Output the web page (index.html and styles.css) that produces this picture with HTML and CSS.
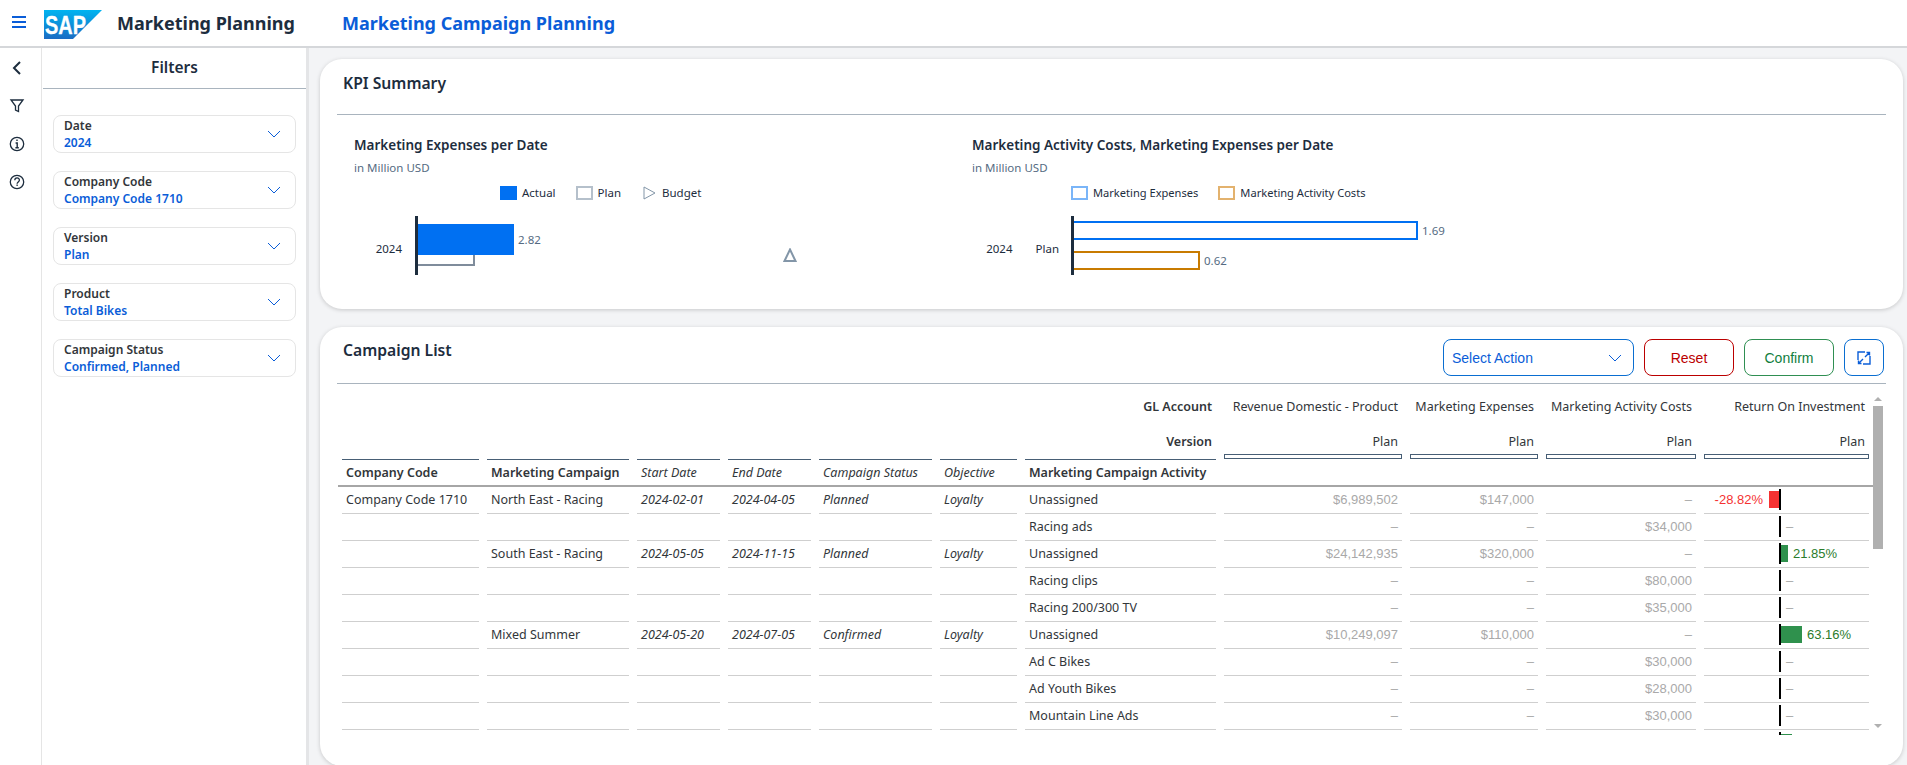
FILE: index.html
```html
<!DOCTYPE html>
<html lang="en">
<head>
    <meta charset="UTF-8">
    <meta name="viewport" content="width=device-width, initial-scale=1.0">
    <title>Marketing Planning</title>
    <link rel="stylesheet" href="styles.css">
</head>
<body>
    <header class="shell-bar">
        <svg class="menu-icon" width="14" height="12" viewBox="0 0 14 12"><path d="M0 1h14M0 6h14M0 11h14" stroke="#0a5dd8" stroke-width="2"/></svg>
        <svg class="sap-logo" width="58" height="29" viewBox="0 0 58 29">
            <defs><linearGradient id="sapBlue" x1="0" y1="0" x2="0" y2="1"><stop offset="0" stop-color="#00b4f0"/><stop offset="1" stop-color="#1a6cc4"/></linearGradient></defs>
            <polygon points="0,0 58,0 29,29 0,29" fill="url(#sapBlue)"/>
            <text x="1" y="24" fill="#fff" stroke="#fff" stroke-width="0.300" font-family="Liberation Sans" font-weight="700" font-size="25" textLength="41" lengthAdjust="spacingAndGlyphs">SAP</text>
        </svg>
        <span class="app-title">Marketing Planning</span>
        <span class="page-title">Marketing Campaign Planning</span>
    </header>

    <div class="workspace">
        <nav class="rail">
            <svg width="20" height="20" viewBox="0 0 20 20"><path d="M13 4l-6 6 6 6" fill="none" stroke="#1d2d3e" stroke-width="2"/></svg>
            <svg width="20" height="20" viewBox="0 0 20 20"><path d="M4 4h12l-4.500 6v5.500l-3-1.500v-4z" fill="none" stroke="#1d2d3e" stroke-width="1.300"/></svg>
            <svg width="20" height="20" viewBox="0 0 20 20"><circle cx="10" cy="10" r="6.700" fill="none" stroke="#1d2d3e" stroke-width="1.300"/><path d="M10 5.500v1.600M8.600 9h1.600v4.600M8.400 13.800h3.400" fill="none" stroke="#1d2d3e" stroke-width="1.400"/></svg>
            <svg width="20" height="20" viewBox="0 0 20 20"><circle cx="10" cy="10" r="6.700" fill="none" stroke="#1d2d3e" stroke-width="1.300"/><path d="M7.800 8.200c0-3 4.600-3 4.600-.1 0 1.900-2.300 1.900-2.300 3.700M10.100 12.600v1.500" fill="none" stroke="#1d2d3e" stroke-width="1.300"/></svg>
        </nav>

        <aside class="filters">
            <h2 class="filters-title">Filters</h2>
            <div class="filter-list">
                <div class="filter"><div><div class="filter-label">Date</div><div class="filter-value">2024</div></div><svg class="chevron" width="14" height="8" viewBox="0 0 14 8"><path d="M1 1l6 6 6-6" fill="none" stroke="#0a5dd8" stroke-width="1"/></svg></div>
                <div class="filter"><div><div class="filter-label">Company Code</div><div class="filter-value">Company Code 1710</div></div><svg class="chevron" width="14" height="8" viewBox="0 0 14 8"><path d="M1 1l6 6 6-6" fill="none" stroke="#0a5dd8" stroke-width="1"/></svg></div>
                <div class="filter"><div><div class="filter-label">Version</div><div class="filter-value">Plan</div></div><svg class="chevron" width="14" height="8" viewBox="0 0 14 8"><path d="M1 1l6 6 6-6" fill="none" stroke="#0a5dd8" stroke-width="1"/></svg></div>
                <div class="filter"><div><div class="filter-label">Product</div><div class="filter-value">Total Bikes</div></div><svg class="chevron" width="14" height="8" viewBox="0 0 14 8"><path d="M1 1l6 6 6-6" fill="none" stroke="#0a5dd8" stroke-width="1"/></svg></div>
                <div class="filter"><div><div class="filter-label">Campaign Status</div><div class="filter-value">Confirmed, Planned</div></div><svg class="chevron" width="14" height="8" viewBox="0 0 14 8"><path d="M1 1l6 6 6-6" fill="none" stroke="#0a5dd8" stroke-width="1"/></svg></div>
            </div>
        </aside>

        <main class="content">
            <section class="card kpi-card">
                <div class="card-head"><h2 class="card-title">KPI Summary</h2></div>
                <div class="charts">
                    <div class="chart chart-expenses">
                        <h3 class="chart-title">Marketing Expenses per Date</h3>
                        <div class="chart-sub">in Million USD</div>
                        <div class="legend legend-expenses">
                            <span class="legend-item"><i class="swatch swatch-actual"></i>Actual</span>
                            <span class="legend-item"><i class="swatch swatch-plan"></i>Plan</span>
                            <span class="legend-item legend-budget"><svg width="14" height="14" viewBox="0 0 14 14"><path d="M1 1l11 6-11 6z" fill="none" stroke="#8396a8" stroke-width="1"/></svg>Budget</span>
                        </div>
                        <div class="plot">
                            <div class="plot-labels plot-labels-one"><span>2024</span></div>
                            <div class="axis"></div>
                            <div class="bars-one">
                                <div class="bar-row"><div class="bar-actual"></div><span class="bar-value">2.82</span></div>
                                <div class="bar-plan"></div>
                            </div>
                            <svg class="budget-mark" width="14" height="14" viewBox="0 0 14 14"><path d="M7 1.500l5.500 11.500h-11z" fill="none" stroke="#8396a8" stroke-width="2"/></svg>
                        </div>
                    </div>
                    <div class="chart">
                        <h3 class="chart-title">Marketing Activity Costs, Marketing Expenses per Date</h3>
                        <div class="chart-sub">in Million USD</div>
                        <div class="legend legend-costs">
                            <span class="legend-item"><i class="swatch swatch-expenses"></i>Marketing Expenses</span>
                            <span class="legend-item"><i class="swatch swatch-costs"></i>Marketing Activity Costs</span>
                        </div>
                        <div class="plot">
                            <div class="plot-labels plot-labels-two"><span>2024</span><span>Plan</span></div>
                            <div class="axis"></div>
                            <div class="bars-two">
                                <div class="bar-row"><div class="bar-outline bar-blue"></div><span class="bar-value">1.69</span></div>
                                <div class="bar-row"><div class="bar-outline bar-orange"></div><span class="bar-value">0.62</span></div>
                            </div>
                        </div>
                    </div>
                </div>
            </section>

            <section class="card list-card">
                <div class="card-head list-head">
                    <h2 class="card-title">Campaign List</h2>
                    <div class="actions">
                        <div class="select-action">Select Action<svg width="14" height="8" viewBox="0 0 14 8"><path d="M1 1l6 6 6-6" fill="none" stroke="#0a5dd8" stroke-width="1"/></svg></div>
                        <button class="btn btn-reset">Reset</button>
                        <button class="btn btn-confirm">Confirm</button>
                        <button class="btn btn-expand"><svg width="14" height="14" viewBox="0 0 14 14"><path d="M1 9V1h7M13 5v8H6M9.500 1.500H12.500V4.500M12.500 1.500L8 6M1.500 9.500V12.500H4.500M1.500 12.500L6 8" fill="none" stroke="#0a5dd8" stroke-width="1.400"/></svg></button>
                    </div>
                </div>

                <div class="table-wrap">
                    <div class="table">
                        <div class="row row-account">
                            <div class="dim-name">GL Account</div>
                            <div class="measure">Revenue Domestic - Product</div>
                            <div class="measure">Marketing Expenses</div>
                            <div class="measure">Marketing Activity Costs</div>
                            <div class="measure">Return On Investment</div>
                        </div>
                        <div class="row row-version">
                            <div class="dim-name">Version</div>
                            <div class="measure"><span>Plan</span><i class="col-bar"></i></div>
                            <div class="measure"><span>Plan</span><i class="col-bar"></i></div>
                            <div class="measure"><span>Plan</span><i class="col-bar"></i></div>
                            <div class="measure"><span>Plan</span><i class="col-bar"></i></div>
                        </div>
                        <div class="row row-head">
                            <div class="th">Company Code</div>
                            <div class="th">Marketing Campaign</div>
                            <div class="th th-attr">Start Date</div>
                            <div class="th th-attr">End Date</div>
                            <div class="th th-attr">Campaign Status</div>
                            <div class="th th-attr">Objective</div>
                            <div class="th">Marketing Campaign Activity</div>
                        </div>

                        <div class="row"><div class="cell">Company Code 1710</div><div class="cell">North East - Racing</div><div class="cell attr">2024-02-01</div><div class="cell attr">2024-04-05</div><div class="cell attr">Planned</div><div class="cell attr">Loyalty</div><div class="cell">Unassigned</div><div class="cell num">$6,989,502</div><div class="cell num">$147,000</div><div class="cell num">–</div><div class="cell roi"><div class="roi-neg"><span class="roi-bad">-28.82%</span><i class="roi-bar bar-bad" style="width:10px"></i></div><i class="roi-axis"></i></div></div>
                        <div class="row"><div class="cell"></div><div class="cell"></div><div class="cell"></div><div class="cell"></div><div class="cell"></div><div class="cell"></div><div class="cell">Racing ads</div><div class="cell num">–</div><div class="cell num">–</div><div class="cell num">$34,000</div><div class="cell roi"><div class="roi-neg"></div><i class="roi-axis"></i><div class="roi-pos"><span class="roi-none">–</span></div></div></div>
                        <div class="row"><div class="cell"></div><div class="cell">South East - Racing</div><div class="cell attr">2024-05-05</div><div class="cell attr">2024-11-15</div><div class="cell attr">Planned</div><div class="cell attr">Loyalty</div><div class="cell">Unassigned</div><div class="cell num">$24,142,935</div><div class="cell num">$320,000</div><div class="cell num">–</div><div class="cell roi"><div class="roi-neg"></div><i class="roi-axis"></i><div class="roi-pos"><i class="roi-bar bar-good" style="width:7px"></i><span class="roi-good">21.85%</span></div></div></div>
                        <div class="row"><div class="cell"></div><div class="cell"></div><div class="cell"></div><div class="cell"></div><div class="cell"></div><div class="cell"></div><div class="cell">Racing clips</div><div class="cell num">–</div><div class="cell num">–</div><div class="cell num">$80,000</div><div class="cell roi"><div class="roi-neg"></div><i class="roi-axis"></i><div class="roi-pos"><span class="roi-none">–</span></div></div></div>
                        <div class="row"><div class="cell"></div><div class="cell"></div><div class="cell"></div><div class="cell"></div><div class="cell"></div><div class="cell"></div><div class="cell">Racing 200/300 TV</div><div class="cell num">–</div><div class="cell num">–</div><div class="cell num">$35,000</div><div class="cell roi"><div class="roi-neg"></div><i class="roi-axis"></i><div class="roi-pos"><span class="roi-none">–</span></div></div></div>
                        <div class="row"><div class="cell"></div><div class="cell">Mixed Summer</div><div class="cell attr">2024-05-20</div><div class="cell attr">2024-07-05</div><div class="cell attr">Confirmed</div><div class="cell attr">Loyalty</div><div class="cell">Unassigned</div><div class="cell num">$10,249,097</div><div class="cell num">$110,000</div><div class="cell num">–</div><div class="cell roi"><div class="roi-neg"></div><i class="roi-axis"></i><div class="roi-pos"><i class="roi-bar bar-good" style="width:21px"></i><span class="roi-good">63.16%</span></div></div></div>
                        <div class="row"><div class="cell"></div><div class="cell"></div><div class="cell"></div><div class="cell"></div><div class="cell"></div><div class="cell"></div><div class="cell">Ad C Bikes</div><div class="cell num">–</div><div class="cell num">–</div><div class="cell num">$30,000</div><div class="cell roi"><div class="roi-neg"></div><i class="roi-axis"></i><div class="roi-pos"><span class="roi-none">–</span></div></div></div>
                        <div class="row"><div class="cell"></div><div class="cell"></div><div class="cell"></div><div class="cell"></div><div class="cell"></div><div class="cell"></div><div class="cell">Ad Youth Bikes</div><div class="cell num">–</div><div class="cell num">–</div><div class="cell num">$28,000</div><div class="cell roi"><div class="roi-neg"></div><i class="roi-axis"></i><div class="roi-pos"><span class="roi-none">–</span></div></div></div>
                        <div class="row"><div class="cell"></div><div class="cell"></div><div class="cell"></div><div class="cell"></div><div class="cell"></div><div class="cell"></div><div class="cell">Mountain Line Ads</div><div class="cell num">–</div><div class="cell num">–</div><div class="cell num">$30,000</div><div class="cell roi"><div class="roi-neg"></div><i class="roi-axis"></i><div class="roi-pos"><span class="roi-none">–</span></div></div></div>
                        <div class="row row-cut"><div class="cell"></div><div class="cell"></div><div class="cell"></div><div class="cell"></div><div class="cell"></div><div class="cell"></div><div class="cell"></div><div class="cell"></div><div class="cell"></div><div class="cell"></div><div class="cell roi"><div class="roi-neg"></div><i class="roi-axis"></i><div class="roi-pos"><i class="roi-bar bar-good" style="width:11px"></i></div></div></div>
                    </div>
                    <div class="scrollbar">
                        <i class="arrow-up"></i>
                        <div class="thumb"></div>
                        <i class="arrow-down"></i>
                    </div>
                </div>
            </section>
        </main>
    </div>
</body>
</html>
```

FILE: styles.css
```css
* {
    box-sizing: border-box;
}
body {
    font-family: 'Noto Sans', sans-serif;
    background-color: #fff;
    color: #1d2d3e;
    margin: 0;
    height: 765px;
    overflow: hidden;
    display: flex;
    flex-direction: column;
}
h2, h3 {
    margin: 0;
}

/* top bar */
.shell-bar {
    height: 48px;
    flex: none;
    display: flex;
    align-items: center;
    padding-left: 12px;
    border-bottom: 2px solid #d5d7da;
}
.menu-icon {
    margin: 0 18px 2px 0;
}
.sap-logo {
    margin: 3px 15px 0 0;
}
.app-title {
    font-size: 18px;
    font-weight: 700;
    width: 225px;
}
.page-title {
    font-size: 18px;
    font-weight: 700;
    color: #0a5dd8;
}

.workspace {
    flex: 1;
    display: flex;
    min-height: 0;
}

/* left icon rail */
.rail {
    width: 42px;
    flex: none;
    border-right: 1px solid #e5e5e5;
    display: flex;
    flex-direction: column;
    gap: 18px;
    padding: 10px 0 0 7px;
}

/* filter panel */
.filters {
    width: 267px;
    flex: none;
    padding-left: 1px;
    border-right: 3px solid #e4e5e7;
}
.filters-title {
    height: 41px;
    width: 263px;
    border-bottom: 1px solid #a9b4be;
    text-align: center;
    font-size: 15.500px;
    font-weight: 600;
    line-height: 38px;
}
.filter-list {
    display: flex;
    flex-direction: column;
    gap: 18px;
    padding: 26px 10px 0 10px;
}
.filter {
    height: 38px;
    width: 243px;
    border: 1px solid #e5e5e5;
    border-radius: 8px;
    padding: 0 14px 0 10px;
    display: flex;
    align-items: center;
    justify-content: space-between;
    font-size: 12px;
    font-weight: 600;
    line-height: 17px;
}
.filter-label {
    color: #32363a;
}
.filter-value {
    color: #0a5dd8;
}

/* main area */
.content {
    flex: 1;
    min-width: 0;
    background-color: #f3f4f6;
    padding: 11px 4px 0 11px;
    display: flex;
    flex-direction: column;
    gap: 18px;
}
.card {
    background-color: #fff;
    border-radius: 22px;
    box-shadow: 0 1px 4px rgba(0, 0, 0, 0.18);
    padding: 0 17px;
}
.kpi-card {
    height: 250px;
    flex: none;
}
.list-card {
    flex: 1;
    margin-bottom: -1px;
}
.card-head {
    height: 56px;
    border-bottom: 1px solid #a9b4be;
    padding-left: 6px;
}
.card-title {
    font-size: 15.700px;
    font-weight: 600;
    line-height: 48px;
}

/* charts */
.charts {
    display: flex;
    padding: 19px 0 0 17px;
}
.chart {
    font-size: 11.500px;
}
.chart-expenses {
    width: 618px;
}
.chart-title {
    font-size: 13.500px;
    font-weight: 600;
    line-height: 22px;
}
.chart-sub {
    color: #556b82;
    margin-top: 4px;
    line-height: 16px;
}
.legend {
    display: flex;
    gap: 20px;
    margin-top: 9px;
    height: 16px;
}
.legend-expenses {
    padding-left: 146px;
}
.legend-costs {
    padding-left: 99px;
    font-size: 11.100px;
}
.legend-item {
    display: flex;
    align-items: center;
    gap: 5px;
    line-height: 16px;
}
.legend-budget {
    margin-left: 2px;
}
.swatch {
    display: block;
    width: 17px;
    height: 14px;
}
.swatch-actual {
    background-color: #0070f2;
}
.swatch-plan {
    border: 2px solid #b5c0cb;
}
.swatch-expenses {
    border: 2px solid #7ab5f8;
}
.swatch-costs {
    border: 2px solid #e3b26e;
}
.plot {
    display: flex;
    margin-top: 15px;
    height: 59px;
}
.plot-labels {
    display: flex;
    align-items: center;
    justify-content: flex-end;
    padding-top: 5px;
}
.plot-labels-one {
    width: 61px;
    padding-right: 13px;
}
.plot-labels-two {
    width: 99px;
    gap: 23px;
    padding-right: 12px;
}
.axis {
    width: 3px;
    background-color: #1d2d3e;
}
.bars-one {
    padding-top: 8px;
    width: 365px;
}
.bar-row {
    display: flex;
    align-items: center;
    gap: 4px;
}
.bar-actual {
    width: 96px;
    height: 31px;
    background-color: #0070f2;
}
.bar-plan {
    width: 57px;
    height: 11px;
    border: 2px solid #7f8c9b;
    border-top: 0;
    border-left: 0;
}
.bar-value {
    color: #556b82;
}
.budget-mark {
    margin-top: 32px;
}
.bars-two {
    padding-top: 5px;
    display: flex;
    flex-direction: column;
    gap: 11px;
}
.bar-outline {
    height: 19px;
    border-style: solid;
    border-width: 2px;
    border-left: 0;
}
.bar-blue {
    width: 344px;
    border-color: #0070f2;
}
.bar-orange {
    width: 126px;
    border-color: #c87b00;
}

/* campaign list */
.list-head {
    height: 57px;
    display: flex;
    justify-content: space-between;
    align-items: flex-start;
}
.list-head .card-title {
    line-height: 46px;
}
.actions {
    display: flex;
    gap: 10px;
    padding: 12px 2px 0 0;
    font-family: 'Liberation Sans', sans-serif;
    font-size: 14px;
}
.select-action {
    width: 191px;
    height: 37px;
    border: 1px solid #0a6ed1;
    border-radius: 8px;
    color: #0a5dd8;
    padding: 0 11px 0 8px;
    display: flex;
    align-items: center;
    justify-content: space-between;
}
.btn {
    width: 90px;
    height: 37px;
    background-color: #fff;
    border: 1px solid;
    border-radius: 8px;
    font: inherit;
    padding: 0;
}
.btn-reset {
    color: #bb0000;
    border-color: #bb0000;
}
.btn-confirm {
    color: #107e3e;
    border-color: #2f8f52;
}
.btn-expand {
    width: 40px;
    border-color: #0a6ed1;
    display: flex;
    align-items: center;
    justify-content: center;
}

.table-wrap {
    display: flex;
    height: 351px;
    overflow: hidden;
    padding-top: 7px;
    padding-left: 1px;
}
.table {
    width: 1535px;
    flex: none;
    font-size: 12.500px;
    color: #32363a;
}
.row {
    display: grid;
    grid-template-columns: 137px 142px 83px 83px 113px 77px 191px 178px 128px 150px 165px;
    column-gap: 8px;
    height: 27px;
    padding-left: 4px;
}
.row-account {
    height: 35px;
}
.row-version {
    height: 33px;
}
.dim-name {
    grid-column: 1 / 8;
    text-align: right;
    font-weight: 600;
    padding-right: 4px;
    line-height: 32px;
}
.measure {
    text-align: right;
    padding-right: 4px;
    line-height: 32px;
}
.row-version .measure {
    display: flex;
    flex-direction: column;
    justify-content: flex-end;
    line-height: 20px;
    padding-right: 0;
}
.row-version .measure span {
    padding-right: 4px;
}
.col-bar {
    display: block;
    height: 5px;
    border: 1px solid #475e75;
    margin-top: 2px;
}
.row-head {
    border-bottom: 2px solid #a6a6a6;
    height: 28px;
    margin-bottom: -1px;
}
.th {
    border-top: 1px solid #475e75;
    padding-left: 4px;
    font-weight: 600;
    line-height: 25px;
}
.th-attr {
    font-style: italic;
    font-weight: 400;
}
.cell {
    border-bottom: 1px solid #cfcfcf;
    padding: 0 4px;
    line-height: 27px;
    white-space: nowrap;
}
.attr {
    font-style: italic;
}
.num {
    font-family: 'Liberation Sans', sans-serif;
    font-size: 13px;
    color: #a9a9a9;
    text-align: right;
}
.roi {
    display: flex;
    align-items: center;
    padding: 0;
    font-family: 'Liberation Sans', sans-serif;
    font-size: 13px;
}
.roi-neg {
    width: 75px;
    display: flex;
    justify-content: flex-end;
    align-items: center;
    gap: 6px;
}
.roi-axis {
    display: block;
    width: 2px;
    height: 21px;
    background-color: #000;
}
.roi-pos {
    display: flex;
    align-items: center;
    gap: 5px;
}
.roi-bar {
    display: block;
    height: 17px;
}
.bar-bad {
    background-color: #f53232;
}
.bar-good {
    background-color: #2f914d;
}
.roi-bad {
    color: #f53232;
}
.roi-good {
    color: #2b7c2b;
}
.roi-none {
    color: #a9a9a9;
    margin-left: 5px;
}

.scrollbar {
    width: 10px;
    flex: none;
    display: flex;
    flex-direction: column;
    align-items: center;
}
.thumb {
    width: 10px;
    height: 143px;
    background-color: #b0b0b0;
    margin-top: 5px;
    flex: none;
}
.arrow-up, .arrow-down {
    display: block;
    width: 0;
    height: 0;
    border-left: 4px solid transparent;
    border-right: 4px solid transparent;
    flex: none;
}
.arrow-up {
    border-bottom: 4px solid #b0b0b0;
    margin-top: 6px;
}
.arrow-down {
    border-top: 4px solid #b0b0b0;
    margin-top: 175px;
}
```
